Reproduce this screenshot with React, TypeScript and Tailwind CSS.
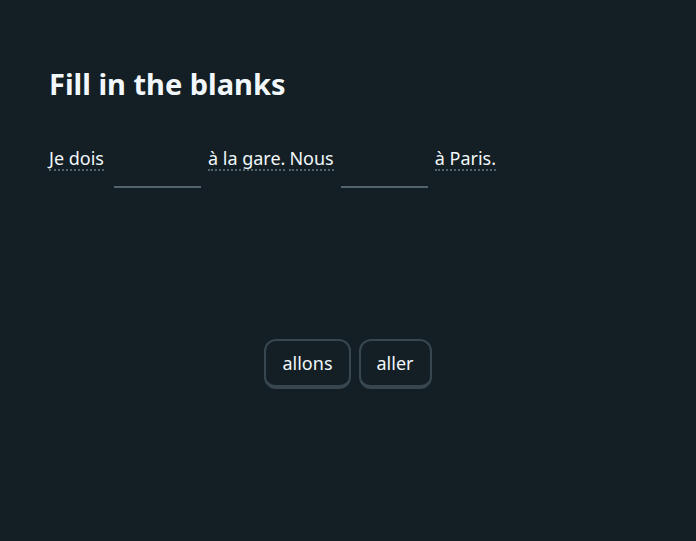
import React from "react";

const Word = ({ children }: { children: React.ReactNode }) => (
  <span className="border-b-2 border-dotted border-[#52656d] pb-[1px] leading-[20px]">{children}</span>
);

export default function App() {
  return (
    <div className="flex h-[541px] w-[696px] flex-col bg-[#131f24] text-[#f1f7fb]" style={{ fontFamily: "'Noto Sans', sans-serif" }}>
      <h1 className="ml-[49px] mt-[66px] text-[29px] font-bold leading-[36px]">Fill in the blanks</h1>
      <div className="ml-[49px] mt-[46px] flex items-center text-[18px]">
        <Word>Je dois</Word>
        <span className="ml-[10px] mr-[7px] inline-block h-[2px] w-[87px] translate-y-[27px] bg-[#52656d]" />
        <span className="flex gap-[4px]">
          <Word>à la gare.</Word>
          <Word>Nous</Word>
        </span>
        <span className="ml-[7px] mr-[7px] inline-block h-[2px] w-[87px] translate-y-[27px] bg-[#52656d]" />
        <Word>à Paris.</Word>
      </div>
      <div className="flex flex-1 items-center justify-center gap-[8px] pt-[16px]">
        {["allons", "aller"].map((w) => (
          <button
            key={w}
            className="h-[50px] rounded-[12px] border-2 border-b-4 border-[#37464f] px-[16px] text-[18px] text-[#f1f7fb]"
          >
            {w}
          </button>
        ))}
      </div>
    </div>
  );
}
